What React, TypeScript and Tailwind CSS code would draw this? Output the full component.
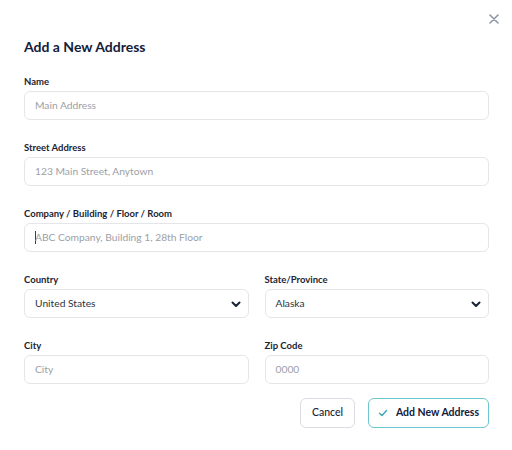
import React from "react";

const font = { fontFamily: "Lato, 'Noto Sans', sans-serif" };

function Label({ children }: { children: React.ReactNode }) {
  return (
    <div className="text-[9.5px] leading-[14px] font-bold text-[#1b2433]">{children}</div>
  );
}

function Input({ placeholder, caret }: { placeholder: string; caret?: boolean }) {
  return (
    <div className="mt-[2px] h-[29px] rounded-[6px] border border-[#e4e6ea] bg-white flex items-center px-[10px]">
      {caret && <span className="w-px h-[13px] bg-[#374151] mr-[-1px]" />}
      <span className="text-[10.25px] text-[#9ca0a6]">{placeholder}</span>
    </div>
  );
}

function Select({ value }: { value: string }) {
  return (
    <div className="mt-[2px] h-[29px] rounded-[6px] border border-[#e4e6ea] bg-white flex items-center justify-between pl-[10px] pr-[6px]">
      <span className="text-[10.25px] text-[#2a3342]">{value}</span>
      <svg width="12" height="12" viewBox="0 0 12 12" fill="none">
        <path d="M2.5 4.5L6 8L9.5 4.5" stroke="#1b2433" strokeWidth="2" strokeLinecap="round" strokeLinejoin="round" />
      </svg>
    </div>
  );
}

export default function App() {
  return (
    <div className="w-[512px] h-[450px] bg-white relative px-6 pr-[23px]" style={font}>
      <button className="absolute right-[12px] top-[13px] w-[12px] h-[12px] flex items-center justify-center">
        <svg width="10" height="10" viewBox="0 0 10 10" fill="none">
          <path d="M1 1L9 9M9 1L1 9" stroke="#8f96a3" strokeWidth="1.6" strokeLinecap="round" />
        </svg>
      </button>
      <div className="pt-[35px]">
        <h2 className="text-[14px] leading-[24px] font-bold text-[#13203a]">Add a New Address</h2>
      </div>
      <div className="mt-[16px] flex flex-col gap-[21px]">
        <div>
          <Label>Name</Label>
          <Input placeholder="Main Address" />
        </div>
        <div>
          <Label>Street Address</Label>
          <Input placeholder="123 Main Street, Anytown" />
        </div>
        <div>
          <Label>Company / Building / Floor / Room</Label>
          <Input placeholder="ABC Company, Building 1, 28th Floor" caret />
        </div>
        <div className="grid grid-cols-2 gap-x-[16px]">
          <div>
            <Label>Country</Label>
            <Select value="United States" />
          </div>
          <div>
            <Label>State/Province</Label>
            <Select value="Alaska" />
          </div>
        </div>
        <div className="grid grid-cols-2 gap-x-[16px]">
          <div>
            <Label>City</Label>
            <Input placeholder="City" />
          </div>
          <div>
            <Label>Zip Code</Label>
            <Input placeholder="0000" />
          </div>
        </div>
      </div>
      <div className="mt-[14px] flex justify-end gap-[13px]">
        <button className="h-[30px] w-[55px] rounded-[6px] border border-[#d9dce0] bg-white text-[10.5px] font-medium text-[#1b2433]">
          Cancel
        </button>
        <button className="h-[30px] w-[121px] rounded-[6px] border border-[#6cc5cf] bg-white flex items-center justify-center gap-[8px] text-[10.5px] font-bold text-[#13203a]">
          <svg width="10" height="10" viewBox="0 0 10 10" fill="none">
            <path d="M1.5 5.2L4 7.5L8.5 2.5" stroke="#3aa7b5" strokeWidth="1.4" strokeLinecap="round" strokeLinejoin="round" />
          </svg>
          Add New Address
        </button>
      </div>
    </div>
  );
}
